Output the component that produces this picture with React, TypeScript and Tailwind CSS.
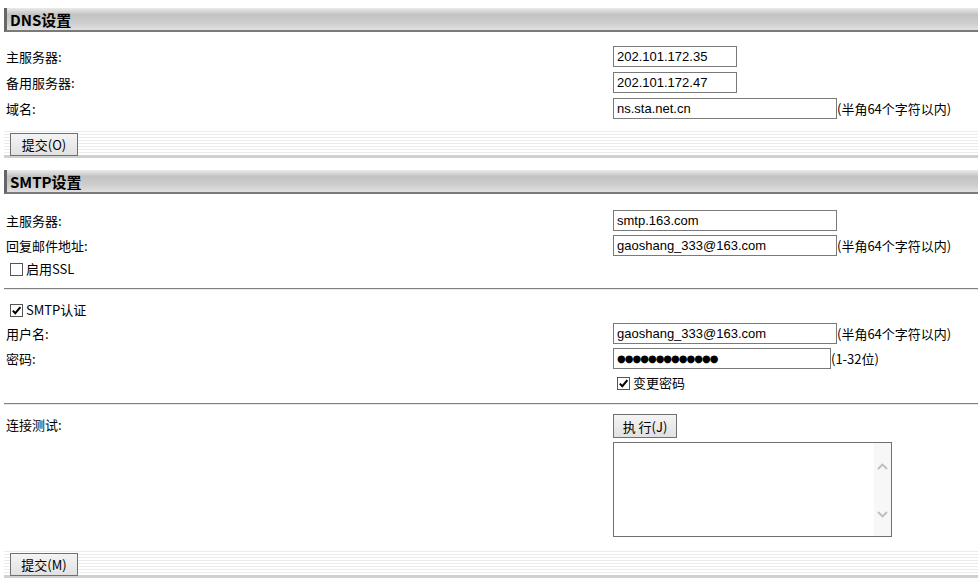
import React from "react";

const LBL = "font-['Noto_Sans_CJK_SC',sans-serif] text-[13px] text-black leading-[18px]";

function Header({ title }: { title: string }) {
  return (
    <div className="flex h-[24px] items-center border-b-2 border-l-[3px] border-b-[#7a7a7a] border-l-[#666666] bg-[linear-gradient(to_bottom,#ebebeb_0%,#c2c2c2_30%,#cfcfcf_70%,#e0e0e0_100%)] pl-[3px]">
      <span className="font-['Noto_Sans_CJK_SC',sans-serif] text-[15px] font-bold leading-none text-black">{title}</span>
    </div>
  );
}

function TextInput({ value, w }: { value: string; w: string }) {
  return (
    <input
      readOnly
      value={value}
      className={`h-[21px] ${w} border border-[#7a7a7a] bg-white px-[3px] font-['Liberation_Sans',sans-serif] text-[13px] text-black outline-none`}
    />
  );
}

function Row({ label, children }: { label: string; children: React.ReactNode }) {
  return (
    <div className="flex h-[21px] items-center">
      <div className={`w-[609px] pl-[2px] ${LBL}`}>{label}</div>
      {children}
    </div>
  );
}

function Hint({ text }: { text: string }) {
  return <span className={`${LBL} whitespace-nowrap`}>{text}</span>;
}

function Check({ checked, label }: { checked: boolean; label: string }) {
  return (
    <div className="flex h-[18px] items-center">
      <span className="flex h-[13px] w-[13px] items-center justify-center border border-[#555555] bg-white">
        {checked && (
          <svg width="11" height="11" viewBox="0 0 11 11">
            <path d="M1.8 5.6 L4.3 8.2 L9.4 2.2" fill="none" stroke="#000" strokeWidth="2" />
          </svg>
        )}
      </span>
      <span className={`${LBL} ml-[3px]`}>{label}</span>
    </div>
  );
}

function Btn({ label, w, h }: { label: string; w: string; h: string }) {
  return (
    <button className={`${w} ${h} border border-[#707070] bg-[linear-gradient(to_bottom,#f4f4f4,#e1e1e1)] font-['Noto_Sans_CJK_SC',sans-serif] text-[13px] leading-none text-black`}>
      {label}
    </button>
  );
}

function SubmitBar({ label }: { label: string }) {
  return (
    <div className="h-[27px] border-b-[3px] border-b-[#d0d0d0] bg-[repeating-linear-gradient(to_bottom,#ebebeb_0px,#ebebeb_1px,#ffffff_1px,#ffffff_3px)] pl-[6px] pt-[1px]">
      <Btn label={label} w="w-[68px]" h="h-[23px]" />
    </div>
  );
}

function Sep() {
  return <div className="h-[2px] border-t border-t-[#808080] border-b border-b-[#e8e8e8]" />;
}

export default function App() {
  return (
    <div className="min-h-[588px] w-[978px] bg-white pl-[4px] pt-[8px]">
      {/* DNS */}
      <Header title="DNS设置" />
      <div className="mt-[14px]">
        <Row label="主服务器:">
          <TextInput value="202.101.172.35" w="w-[124px]" />
        </Row>
      </div>
      <div className="mt-[5px]">
        <Row label="备用服务器:">
          <TextInput value="202.101.172.47" w="w-[124px]" />
        </Row>
      </div>
      <div className="mt-[5px]">
        <Row label="域名:">
          <TextInput value="ns.sta.net.cn" w="w-[224px]" />
          <Hint text="(半角64个字符以内)" />
        </Row>
      </div>
      <div className="mt-[12px]">
        <SubmitBar label="提交(O)" />
      </div>

      {/* SMTP */}
      <div className="mt-[12px]">
        <Header title="SMTP设置" />
      </div>
      <div className="mt-[16px]">
        <Row label="主服务器:">
          <TextInput value="smtp.163.com" w="w-[224px]" />
        </Row>
      </div>
      <div className="mt-[4px]">
        <Row label="回复邮件地址:">
          <TextInput value="gaoshang_333@163.com" w="w-[224px]" />
          <Hint text="(半角64个字符以内)" />
        </Row>
      </div>
      <div className="mt-[4px] pl-[6px]">
        <Check checked={false} label="启用SSL" />
      </div>
      <div className="mt-[10px]">
        <Sep />
      </div>
      <div className="mt-[11px] pl-[6px]">
        <Check checked={true} label="SMTP认证" />
      </div>
      <div className="mt-[4px]">
        <Row label="用户名:">
          <TextInput value="gaoshang_333@163.com" w="w-[224px]" />
          <Hint text="(半角64个字符以内)" />
        </Row>
      </div>
      <div className="mt-[4px]">
        <Row label="密码:">
          <input
            readOnly
            value="●●●●●●●●●●●●●"
            className="h-[21px] w-[218px] border border-[#7a7a7a] bg-white px-[3px] font-['DejaVu_Sans',sans-serif] text-[10px] tracking-[-1px] text-black outline-none"
          />
          <Hint text="(1-32位)" />
        </Row>
      </div>
      <div className="mt-[5px] pl-[613px]">
        <Check checked={true} label="变更密码" />
      </div>
      <div className="mt-[11px]">
        <Sep />
      </div>
      <div className="mt-[9px] flex">
        <div className={`w-[609px] pl-[2px] pt-[2px] ${LBL}`}>连接测试:</div>
        <div className="flex flex-col">
          <Btn label="执 行(J)" w="w-[64px]" h="h-[24px]" />
          <div className="mt-[4px] flex h-[95px] w-[279px] border border-[#707070] bg-white">
            <div className="flex-1" />
            <div className="flex w-[17px] flex-col items-center bg-[#f7f7f7] pt-[20px]">
              <svg width="11" height="7" viewBox="0 0 11 7">
                <path d="M1 6 L5.5 1.5 L10 6" fill="none" stroke="#bdbdbd" strokeWidth="1.8" />
              </svg>
              <div className="h-[41px]" />
              <svg width="11" height="7" viewBox="0 0 11 7">
                <path d="M1 1 L5.5 5.5 L10 1" fill="none" stroke="#bdbdbd" strokeWidth="1.8" />
              </svg>
            </div>
          </div>
        </div>
      </div>
      <div className="mt-[14px]">
        <SubmitBar label="提交(M)" />
      </div>
    </div>
  );
}
